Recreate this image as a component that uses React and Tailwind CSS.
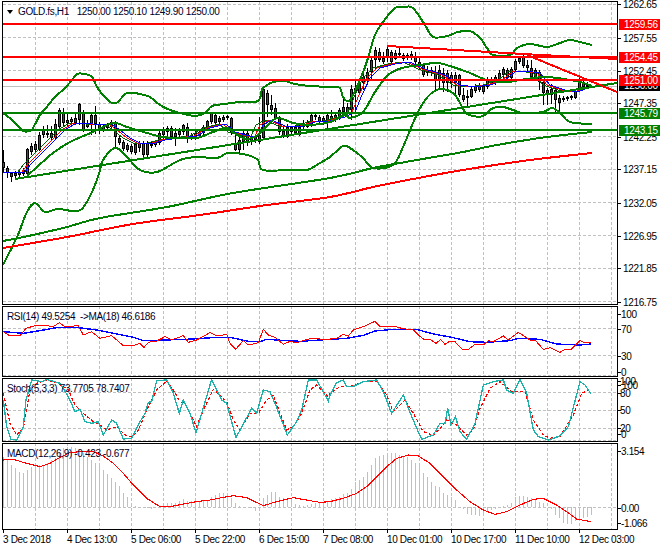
import React from 'react';

// pixel data read off the chart, bars are [bodyTop, bodyBottom, up, high, low]
const bars = [
  [162,168,0,150,172],[168,173,0,166,178],[173,177,0,172,182],[173,176,1],[172,175,1],[170,174,1],[149,174,1,148,176],[146,152,1,143,155],
  [144,150,1,141,152],[135,150,1,132,151],[130,135,1,126,138],[133,135,1,125,138],[133,138,0,126,140],[124,138,1,119,140],[110,127,1,108,128],[112,123,0,108,126],
  [120,123,1,112,127],[119,122,1,117,125],[118,123,1,112,125],[104,120,1,103,125],[113,130,0,110,132],[124,127,1,120,128],[115,125,1,113,135],[115,124,0,106,134],
  [124,131,0,122,134],[126,130,1],[125,128,1],[122,127,1,120,128],[123,137,0,121,148],[138,143,0,135,145],[142,149,0],[145,150,0,143,152],
  [146,152,0,144,154],[144,153,0,142,155],[143,148,1,141,152],[143,155,0,141,160],[143,155,1,141,157],[144,146,1],[142,145,1],[133,143,1,130,145],
  [129,135,1,127,140],[128,132,1,126,137],[128,137,0,126,139],[133,137,1,128,146],[131,135,1,128,138],[125,132,1,124,135],[127,138,0,123,143],[135,138,1],
  [133,138,1],[132,136,1],[127,133,1,125,135],[121,128,1,120,130],[113,122,1,112,124],[115,123,0,113,125],[118,122,1,116,124],[117,120,1,115,122],
  [116,118,1,115,120],[118,133,0,117,135],[143,150,0,133,151],[140,150,1,133,153],[133,142,1,130,150],[133,143,0,130,146],[138,142,1,136,145],[137,140,1,135,143],
  [135,142,1,117,144],[89,138,1,88,139],[93,105,0,90,117],[105,110,0,95,115],[108,118,0,103,120],[118,132,0,116,135],[131,137,0,125,138],[127,137,1,124,138],
  [127,132,1,126,134],[127,133,1,125,135],[127,135,1,125,136],[123,127,1,120,129],[122,127,1,120,128],[115,125,1,113,127],[115,117,1,113,120],[117,122,0,115,124],
  [118,122,1,116,125],[115,122,1,113,130],[116,120,1,110,123],[115,120,0,112,122],[110,118,1,108,120],[107,112,1,97,115],[107,114,0,103,116],[89,110,1,85,120],
  [88,93,0,80,110],[82,93,1,78,95],[77,83,0,72,90],[72,80,1,68,85],[60,72,1,58,80],[50,60,1,47,70],[52,60,0,48,62],[58,62,1,52,64],
  [49,58,1,45,62],[52,62,0,50,64],[53,59,1,50,60],[53,55,1,48,58],[55,59,1],[55,58,1,53,60],[54,57,1,51,60],[57,62,0,52,64],
  [62,66,0,58,70],[65,75,0,63,77],[70,73,1,66,76],[70,73,1,67,76],[74,80,0,66,90],[70,80,1,65,90],[73,83,0,68,92],[73,83,1,70,92],
  [75,83,0,72,88],[75,83,1,72,95],[75,95,0,74,97],[95,100,0,88,102],[96,98,1,90,107],[89,97,1,87,98],[86,91,1,84,93],[85,90,1,83,92],
  [86,92,0,84,94],[79,87,1,77,89],[79,83,1,77,85],[77,83,1,75,85],[73,80,1,70,81],[69,75,1,67,78],[70,78,0,68,80],[69,78,1,67,80],
  [61,70,1,59,72],[58,62,1,56,64],[57,66,0,53,68],[65,68,0,60,72],[68,77,0,60,80],[70,78,1,68,80],[72,82,0,70,90],[82,93,0,80,105],
  [90,95,1,88,105],[89,95,1,84,104],[90,100,0,88,112],[98,103,0,95,112],[98,100,1,96,102],[97,99,1,96,101],[96,98,1,95,100],[91,98,1,90,99],
  [82,91,1,78,92],[82,87,0,77,88],[85,87,1,82,88],[86,87,1,85,88],
];

const upperBand = '3,113 12,120 18,126 23,131 30,131 33,128 40,115 46,108 55,97 65,88 72,80 77,74 85,74 92,77 97,87 103,95 112,103 118,102 125,94 133,93 140,94 150,97 160,105 170,110 180,113 195,116 205,113 212,106 225,104 240,102 258,101 262,89 266,86 273,82 285,81 295,84 310,86 330,87 340,88 343,97 350,100 362,75 368,58 375,35 383,22 395,8 405,7 413,8 425,25 433,37 447,36 458,32 470,31 480,38 487,48 493,55 510,55 517,48 530,44 547,47 560,43 570,40 580,42 592,45';
const lowerBand = '3,265 17,237 27,212 35,203 45,212 58,209 78,211 88,200 98,177 103,160 115,148 125,155 140,170 157,172 180,160 197,157 217,158 228,153 247,155 258,160 263,170 290,170 307,170 320,163 330,157 343,146 350,148 363,158 373,168 393,165 403,147 413,123 423,103 433,92 443,89 455,95 465,112 473,116 483,116 493,108 503,107 513,110 523,113 543,112 552,108 560,113 570,122 592,124';
const midBand = '27,176 37,167 53,153 70,142 93,132 113,123 127,127 147,133 163,137 180,138 197,138 213,132 227,128 237,135 247,139 258,135 265,128 277,118 293,123 310,125 330,122 345,115 350,118 363,112 375,92 388,75 402,68 420,65 437,63 453,67 470,73 487,80 507,82 520,80 543,77 557,78 580,82 592,86';
const slowGreen = '3,241 33,235 67,227 100,218 167,207 233,193 330,178 373,168 417,160 463,152 497,145 547,137 592,132';
const slowRed = '3,248 67,237 133,224 200,215 267,205 330,197 373,187 413,179 463,170 530,160 592,153';
const fastMa = [[3,172],[12,173],[25,172],[30,165],[40,155],[50,145],[57,138],[65,130],[75,124],[85,123],[100,125],[112,124],[120,130],[130,138],[140,143],[155,143],[165,140],[180,138],[197,136],[210,128],[226,124],[235,132],[250,136],[258,136],[263,125],[272,120],[285,126],[300,127],[315,122],[330,121],[345,117],[355,112],[362,95],[370,78],[380,68],[395,64],[410,62],[425,69],[445,75],[460,85],[475,87],[490,85],[505,80],[515,72],[525,71],[540,73],[550,85],[565,90],[578,92],[590,87]];

// crops were read at 3x, ox/oy put them back on the page
const z = (ox, oy, pts) => pts.map(([x, y]) => `${ox + x / 3},${oy + y / 3}`).join(' ');

// catmull-rom through the read points, the bands are curves in the chart
const curve = (points) => {
  const p = points.split(' ').map((s) => s.split(',').map(Number));
  let d = `M${p[0][0]} ${p[0][1]}`;
  for (let i = 0; i < p.length - 1; i++) {
    const a = p[i - 1] || p[i];
    const b = p[i];
    const c = p[i + 1];
    const e = p[i + 2] || c;
    d += ` C${b[0] + (c[0] - a[0]) / 6} ${b[1] + (c[1] - a[1]) / 6} ${c[0] - (e[0] - b[0]) / 6} ${c[1] - (e[1] - b[1]) / 6} ${c[0]} ${c[1]}`;
  }
  return d;
};

const rsiRed = z(0,180,[[10,455],[30,468],[60,467],[78,445],[105,437],[140,437],[160,440],[178,428],[195,440],[235,437],[250,465],[275,455],[300,475],[335,467],[370,497],[400,497],[420,490],[432,502],[445,487],[470,483],[495,470],[515,480],[550,467],[565,487],[590,480],[630,458],[650,468],[680,463],[690,490],[707,508],[730,482],[745,495],[775,488],[790,448],[805,465],[825,472],[850,493],[870,484],[890,488],[930,476],[990,478]])
  + ' ' + z(330,180,[[0,476],[20,475],[40,463],[55,468],[70,450],[100,440],[135,424],[150,440],[190,438],[215,445],[250,450],[265,465],[285,480],[300,478],[318,490],[332,478],[345,493],[360,483],[375,485],[395,507],[415,508],[435,493],[460,495],[475,482],[490,485],[520,468],[535,480],[565,457],[600,480],[615,480],[640,508],[660,503],[690,517],[705,508],[725,507],[750,482],[765,488],[783,488]]);
const rsiBlue = z(0,180,[[10,455],[70,460],[130,450],[170,443],[235,443],[290,450],[340,460],[400,472],[430,482],[560,478],[650,472],[690,472],[750,485],[780,485],[800,478],[860,482],[900,484],[990,478]])
  + ' ' + z(330,180,[[0,478],[50,475],[100,466],[135,453],[190,448],[260,448],[310,462],[365,472],[420,485],[470,487],[540,482],[565,475],[630,478],[680,492],[750,495],[783,492]]);

const stochMain = z(0,370,[[10,90],[20,170],[33,208],[50,210],[70,170],[78,90],[95,30],[125,35],[140,28],[180,40],[205,80],[225,125],[240,118],[255,155],[275,160],[295,155],[310,195],[335,150],[350,160],[370,207],[395,205],[420,155],[435,130],[445,97],[455,95],[470,32],[500,30],[520,70],[538,130],[550,90],[570,130],[588,188],[635,28],[665,90],[680,100],[708,203],[755,115],[770,130],[790,60],[810,65],[825,100],[862,195],[890,155],[905,120],[925,30],[950,30],[985,93]])
  + ' ' + z(330,370,[[0,75],[20,38],[40,30],[50,50],[75,48],[100,35],[140,30],[160,65],[185,130],[220,75],[245,140],[275,208],[310,195],[330,160],[345,160],[353,115],[363,165],[376,140],[390,185],[410,208],[435,160],[460,45],[490,35],[520,30],[530,60],[550,70],[570,28],[590,70],[610,180],[625,200],[655,210],[690,198],[715,170],[750,35],[765,45],[783,72]]);
const stochSignal = z(0,370,[[10,70],[30,160],[50,195],[70,175],[90,60],[110,40],[140,30],[175,40],[205,60],[225,105],[250,130],[280,155],[300,165],[320,180],[350,170],[375,195],[395,200],[415,180],[440,120],[470,60],[500,33],[520,60],[540,95],[555,100],[590,170],[610,120],[640,58],[680,95],[700,150],[720,180],[750,130],[775,130],[800,90],[820,75],[840,130],[860,180],[880,170],[905,130],[930,60],[950,45],[985,80]])
  + ' ' + z(330,370,[[0,70],[30,50],[60,50],[100,35],[140,35],[170,75],[190,125],[225,90],[250,130],[280,185],[310,197],[335,170],[350,150],[380,165],[410,195],[430,180],[450,115],[480,55],[510,35],[545,65],[585,65],[610,150],[640,195],[660,205],[690,200],[730,135],[755,70],[775,60],[783,70]]);

const macdBars = [262,270,285,295,305,310,300,290,285,285,285,278,270,265,245,235,232,230,235,240,250,260,270,278,282,300,312,325,335,348,368,380,405,408,410,412,414,418,414,412,408,400,398,398,392,388,392,394,392,392,392,390,380,375,370,368,372,385,400,408,412,412,415,422,412,385,375,365,365,380,385,388,388,402,405,408,405,402,398,398,395,392,
  388,385,380,372,370,358,335,330,320,305,285,265,258,255,248,248,250,255,258,262,270,278,288,310,322,335,348,350,368,375,382,390,412,418,432,435,435,438,430,422,420,418,415,408,405,400,380,378,378,380,385,390,395,400,412,418,435,445,460,462,462,452,448,445,440,435];
const macdLine = z(0,370,[[10,270],[40,268],[80,280],[120,290],[150,280],[180,262],[210,248],[240,245],[280,245],[310,258],[340,280],[370,310],[400,345],[440,385],[480,410],[510,410],[550,402],[590,395],[630,390],[670,382],[700,377],[740,383],[790,407],[830,395],[880,383],[930,392],[960,397],[990,395]])
  + ' ' + z(330,370,[[0,395],[40,385],[80,370],[110,350],[140,320],[170,290],[200,265],[235,255],[265,258],[300,280],[340,320],[380,360],[420,395],[460,420],[495,433],[530,425],[570,405],[610,388],[640,385],[680,405],[710,425],[740,447],[783,455]]);

const gridX = Array.from({ length: 19 }, (_, i) => 35.5 + 32 * i);
const timeLabels = ['3 Dec 2018', '4 Dec 13:00', '5 Dec 06:00', '5 Dec 22:00', '6 Dec 15:00', '7 Dec 08:00', '10 Dec 01:00', '10 Dec 17:00', '11 Dec 10:00', '12 Dec 03:00'];

const mainTicks = [['1262.65',4],['1257.55',38],['1252.45',71],['1247.35',103],['1242.25',137],['1237.15',169],['1232.05',203],['1226.95',236],['1221.85',268],['1216.75',302]];
const priceTags = [
  ['1259.56',24,'bg-[#ff0000]'],
  ['1254.45',57,'bg-[#ff0000]'],
  ['1250.00',85,'bg-black'],
  ['1251.00',80,'bg-[#ff0000]'],
  ['1245.79',113,'bg-[#008000]'],
  ['1243.15',130,'bg-[#008000]'],
];

function Line({ points, color, width = 1, dash }) {
  return <polyline points={points} fill="none" stroke={color} strokeWidth={width} strokeDasharray={dash} />;
}

function Band({ points, color = '#008000' }) {
  return <path d={curve(points)} fill="none" stroke={color} strokeWidth="2" />;
}

function Grid({ rows, top, bottom }) {
  return (
    <g stroke="#c0c0c0" strokeDasharray="3 2">
      {gridX.map((x) => <line key={x} x1={x} x2={x} y1={top} y2={bottom} />)}
      {rows.map((y) => <line key={y} x1="3" x2="617" y1={y} y2={y} />)}
    </g>
  );
}

function Candles() {
  return (
    <g>
      {bars.map(([t, b, up, hi = t - 2, lo = b + 2], i) => {
        const x = 3 + 4 * i;
        return (
          <g key={i}>
            <line x1={x + 0.5} x2={x + 0.5} y1={hi} y2={lo} stroke="#000" />
            <rect x={x - 1} y={t} width="3" height={b - t} fill="#000" />
            {b - t > 2 && <rect x={x} y={t + 1} width="1" height={b - t - 2} fill={up ? '#008000' : '#ff0000'} />}
          </g>
        );
      })}
    </g>
  );
}

// one chart window: the svg uses page coordinates, the axis labels sit beside it
function Pane({ top, height, className, title, children, axis }) {
  return (
    <div className={`flex pl-[2px] ${className}`} style={{ height }}>
      <div className="relative w-[616px] shrink-0 border border-black bg-white">
        <svg className="block h-full w-full" viewBox={`3 ${top + 1} 614 ${height - 2}`} shapeRendering="crispEdges">
          {children}
        </svg>
        {title}
      </div>
      <div className="relative flex-1">{axis}</div>
    </div>
  );
}

function Tick({ y, top, left = 5, label }) {
  return (
    <>
      <i className="absolute left-0 h-px w-[3px] bg-black" style={{ top: y - top }} />
      <span className="absolute leading-none whitespace-nowrap -translate-y-1/2" style={{ top: y - top + 1, left }}>{label}</span>
    </>
  );
}

export default function App() {
  return (
    <div className="h-[550px] w-[660px] overflow-hidden bg-white pt-px font-['Liberation_Sans',Arial,sans-serif] text-[10px] tracking-[-0.35px] text-black">
      <Pane
        top={1}
        height={304}
        title={
          <div className="absolute left-[4px] top-[5px] flex items-center gap-[5px] leading-none whitespace-nowrap">
            <span className="h-0 w-0 border-x-[3px] border-t-[4px] border-x-transparent border-t-black" />
            <span className="flex gap-[2.7px] text-[#000028]">
              <span className="mr-[5px]">GOLD.fs,H1</span>
              <span>1250.00</span>
              <span>1250.10</span>
              <span>1249.90</span>
              <span>1250.00</span>
            </span>
          </div>
        }
        axis={
          <>
            {mainTicks.map(([label, y]) => <Tick key={label} y={y} top={1} label={label} />)}
            {priceTags.map(([label, y, bg]) => (
              <span key={label} className={`absolute left-px h-[11px] w-[42px] pl-[5px] leading-[11px] text-white ${bg}`} style={{ top: y - 6 }}>{label}</span>
            ))}
          </>
        }
      >
        <Grid rows={[4.5, 37.5, 70.5, 103.5, 136.5, 169.5, 202.5, 235.5, 268.5, 301.5]} top={2} bottom={304} />
        <line x1="3" x2="617" y1="86.5" y2="86.5" stroke="#c0c0c0" />
        <Candles />
        <Line points={fastMa.map(([x, y]) => `${Math.max(3, x - 7)},${y}`).join(' ')} color="#006400" />
        <Line points={fastMa.map(([x, y]) => `${Math.max(3, x - 3)},${y}`).join(' ')} color="#ff0000" />
        <Line points={fastMa.map(([x, y]) => `${x},${y}`).join(' ')} color="#0000ff" />
        <Band points={upperBand} />
        <Band points={lowerBand} />
        <Band points={midBand} />
        <Band points={slowGreen} />
        <Band points={slowRed} color="#ff0000" />
        <Line points="15,179 617,83" color="#008000" width={2} />
        <Line points="3,24 617,24" color="#ff0000" width={2} />
        <Line points="3,57 617,57" color="#ff0000" width={2} />
        <Line points="3,80 617,80" color="#ff0000" width={2} />
        <Line points="3,113 617,113" color="#008000" width={2} />
        <Line points="3,130 617,130" color="#008000" width={2} />
        <Line points="387,46 523,54 617,59" color="#ff0000" width={2} />
        <Line points="527,55 617,92" color="#ff0000" width={2} />
      </Pane>

      <Pane
        top={306}
        height={71}
        className="mt-px"
        title={<span className="absolute left-[4px] top-[5px] leading-none whitespace-nowrap text-[#000028]">RSI(14) 49.5254 &nbsp;-&gt;MA(18) 46.6186</span>}
        axis={[['100',313.5],['70',328.5],['30',355.5],['0',372]].map(([label, y]) => <Tick key={label} y={y} top={306} left={3} label={label} />)}
      >
        <Grid rows={[328.5, 355.5, 375.5]} top={306} bottom={377} />
        <Line points={rsiBlue} color="#0000ff" width={1.4} />
        <Line points={rsiRed} color="#ff0000" />
      </Pane>

      <Pane
        top={378}
        height={64}
        className="mt-px"
        title={<span className="absolute left-[4px] top-[5px] leading-none whitespace-nowrap text-[#000028]">Stoch(5,3,3) 73.7705 78.7407</span>}
        axis={[['100',381,2],['100',385,4],['80',392.5,2],['50',410,2],['20',428,2],['0',434,3]].map(([label, y, left], i) => <Tick key={i} y={y} top={378} left={left} label={label} />)}
      >
        <Grid rows={[392.5, 410.5, 428.5, 440.5]} top={378} bottom={442} />
        <Line points={stochSignal} color="#ff0000" dash="3 2" width={1.2} />
        <Line points={stochMain} color="#20b2aa" width={1.3} />
      </Pane>

      <Pane
        top={443}
        height={87}
        className="mt-px"
        title={<span className="absolute left-[4px] top-[5px] leading-none whitespace-nowrap text-[#000028]">MACD(12,26,9) -0.423 -0.677</span>}
        axis={[['3.154',450.5],['0.00',507.5],['-1.066',522.5]].map(([label, y]) => <Tick key={label} y={y} top={443} left={3} label={label} />)}
      >
        <Grid rows={[507.5]} top={443} bottom={530} />
        <g stroke="#c0c0c0">
          {macdBars.map((v, i) => <line key={i} x1={3.5 + 4 * i} x2={3.5 + 4 * i} y1={370 + v / 3} y2="507" />)}
        </g>
        <Line points={macdLine} color="#ff0000" width={1.1} />
      </Pane>

      <div className="flex pl-[3px] pt-[4px]">
        {timeLabels.map((label) => (
          <span key={label} className="relative w-16 shrink-0 leading-[11px] whitespace-nowrap">
            <i className="absolute -top-[4px] left-0 h-[3px] w-px bg-black" />
            {label}
          </span>
        ))}
      </div>
    </div>
  );
}
